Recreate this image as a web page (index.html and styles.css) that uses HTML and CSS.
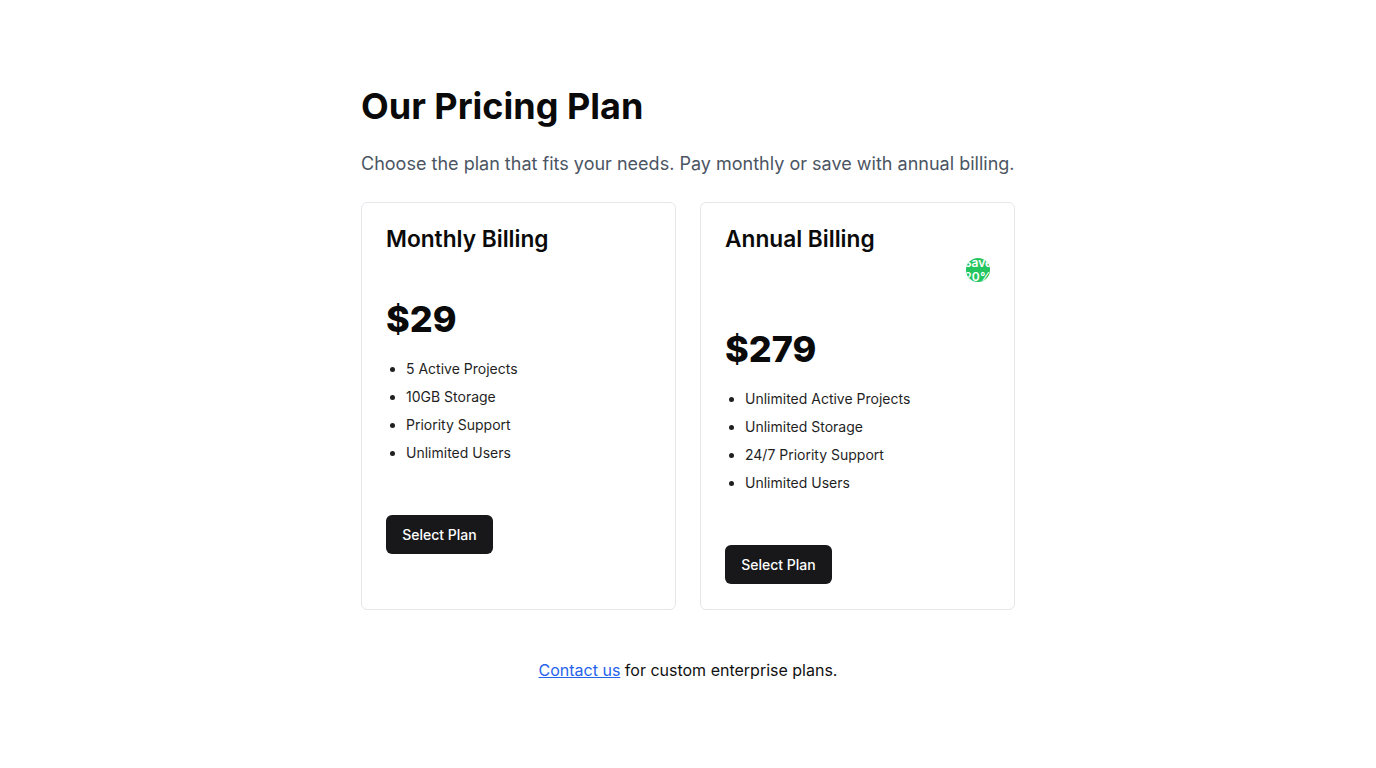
FILE: index.html
```html
<!DOCTYPE html>
<html lang="en">
<head>
<meta charset="utf-8">
<title>Pricing</title>
<link rel="stylesheet" href="styles.css">
</head>
<body>
<main class="page">
  <h1 class="title">Our Pricing Plan</h1>
  <p class="subtitle">Choose the plan that fits your needs. Pay monthly or save with annual billing.</p>
  <div class="cards">
    <section class="card">
      <div class="card-head">
        <h2 class="card-title">Monthly Billing</h2>
      </div>
      <div class="price">$29</div>
      <ul class="features">
        <li>5 Active Projects</li>
        <li>10GB Storage</li>
        <li>Priority Support</li>
        <li>Unlimited Users</li>
      </ul>
      <button class="btn" type="button">Select Plan</button>
    </section>
    <section class="card">
      <div class="card-head">
        <h2 class="card-title">Annual Billing</h2>
        <span class="badge">Save 20%</span>
      </div>
      <div class="price">$279</div>
      <ul class="features">
        <li>Unlimited Active Projects</li>
        <li>Unlimited Storage</li>
        <li>24/7 Priority Support</li>
        <li>Unlimited Users</li>
      </ul>
      <button class="btn" type="button">Select Plan</button>
    </section>
  </div>
  <p class="footer"><a href="#" class="link">Contact us</a> for custom enterprise plans.</p>
</main>
</body>
</html>
```

FILE: styles.css
```css
* { box-sizing: border-box; }
html, body { margin: 0; padding: 0; background: #fff; }
body {
  font-family: Inter, "Noto Sans", sans-serif;
  color: #111;
}
.page {
  width: 654px;
  margin: 0 auto;
  padding-top: 84px;
}
.title {
  margin: 0;
  font-size: 36px;
  line-height: 44px;
  font-weight: 700;
  color: #0a0a0a;
}
.subtitle {
  margin: 22px 0 0;
  font-size: 18px;
  line-height: 28px;
  letter-spacing: 0.01px;
  color: #4b5563;
}
.cards {
  display: grid;
  grid-template-columns: 1fr 1fr;
  gap: 24px;
  margin-top: 24px;
  align-items: stretch;
}
.card {
  border: 1px solid #e5e7eb;
  border-radius: 6px;
  padding: 23px 24px 25px;
  display: flex;
  flex-direction: column;
  align-items: flex-start;
}
.card-head {
  width: 100%;
  display: flex;
  flex-direction: column;
}
.card-title {
  margin: 0;
  font-size: 22.7px;
  line-height: 26px;
  font-weight: 600;
  color: #0a0a0a;
}
.badge {
  align-self: flex-end;
  width: 24px;
  height: 24px;
  margin-top: 6px;
  border-radius: 50%;
  background: #22c55e;
  color: #fff;
  font-size: 12px;
  font-weight: 600;
  line-height: 14px;
  text-align: center;
  overflow: hidden;
  display: flex;
  align-items: center;
  justify-content: center;
}
.price {
  margin-top: 45px;
  font-size: 36px;
  line-height: 44px;
  font-weight: 800;
  color: #0a0a0a;
}
.features {
  margin: 18px 0 0;
  padding-left: 20px;
  font-size: 14px;
  line-height: 20px;
  color: #1f1f1f;
}
.features li { margin-bottom: 8px; }
.btn {
  margin-top: 44px;
  font-family: inherit;
  font-size: 14px;
  font-weight: 500;
  color: #fff;
  background: #18181b;
  border: none;
  border-radius: 6px;
  height: 39px;
  padding: 0 16px;
  width: 107px;
}
.footer {
  margin: 48px 0 0;
  text-align: center;
  font-size: 16px;
  line-height: 24px;
  color: #111;
}
.link { color: #2563eb; }
```
